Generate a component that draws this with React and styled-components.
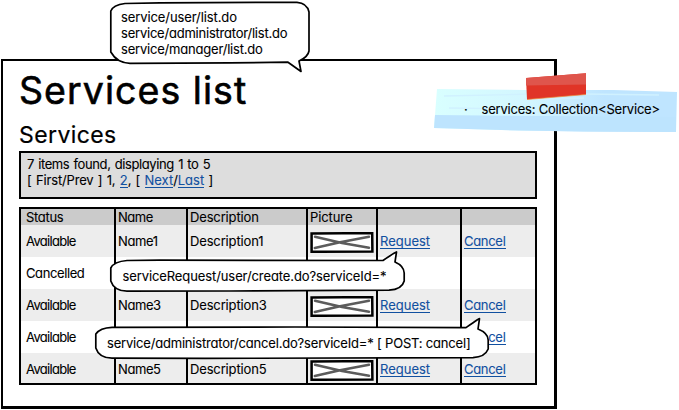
import React from "react";
import styled, { createGlobalStyle } from "styled-components";

const GlobalStyle = createGlobalStyle`
  * { box-sizing: border-box; }
  body {
    margin: 0;
    background: #fff;
    color: #000;
    font: 400 13px/16px Inter, "Liberation Sans", sans-serif;
    font-feature-settings: "cv11";
    -webkit-text-stroke: 0.1px currentColor;
    overflow: hidden;
  }
`;

const Canvas = styled.div`
  position: relative;
  width: 679px;
  height: 410px;
  padding: 59px 0 0 1px;
`;

const Window = styled.main`
  width: 556px;
  height: 350px;
  padding: 8px 17px 0 16px;
  border: solid #000;
  border-width: 2px 3px 3px 2px;
`;

const Title = styled.h1`
  margin: 0;
  font-size: 37.5px;
  font-weight: 400;
  line-height: 44px;
  letter-spacing: 1.05px;
  -webkit-text-stroke: 0.6px currentColor;
`;

const Subtitle = styled.h2`
  margin: 8px 0 0;
  font-size: 23px;
  font-weight: 400;
  line-height: 28px;
  letter-spacing: 0.4px;
  -webkit-text-stroke: 0.2px currentColor;
`;

const Pager = styled.section`
  height: 48px;
  width: 518px;
  margin-top: 2px;
  padding: 3px 6px;
  border: 2px solid #000;
  background: #ddd;
`;

const PagerLine = styled.div`
  white-space: nowrap;
  letter-spacing: ${(p) => p.$tracking || 0}px;
  word-spacing: ${(p) => p.$words || 0}px;
`;

const Link = styled.a`
  color: #1150a0;
  border-bottom: 1px solid currentColor;
  display: inline-block;
  height: 16px;
  line-height: 16px;
  letter-spacing: ${(p) => p.$tracking || 0}px;
`;

const Table = styled.section`
  width: 518px;
  height: 178px;
  margin-top: 8px;
  border: 2px solid #000;
  overflow: hidden;
`;

const Row = styled.div`
  display: grid;
  grid-template-columns: 95px 72px 120px 70px 84px 1fr;
  height: ${(p) => (p.$header ? 16 : 32)}px;
  background: ${(p) => (p.$header ? "#cbcbcb" : p.$striped ? "#ededed" : "#fff")};
`;

const Cell = styled.div`
  display: flex;
  align-items: center;
  padding-left: ${(p) => (p.$first ? 5 : 2)}px;
  border-right: ${(p) => (p.$last ? "none" : "2px solid #000")};
  letter-spacing: ${(p) => p.$tracking || 0}px;
  white-space: nowrap;
`;

const Picture = styled.svg`
  display: block;
  width: 64px;
  height: 21px;
  margin: 3px 0 0 0;
  flex: none;
`;

const Bubble = styled.div`
  position: absolute;
  left: ${(p) => p.$x}px;
  top: ${(p) => p.$y}px;
  width: ${(p) => p.$w}px;
  height: ${(p) => p.$h}px;
  padding: ${(p) => p.$pad};
`;

const BubbleShape = styled.svg`
  position: absolute;
  inset: 0;
  width: 100%;
  height: 100%;
  overflow: visible;
  fill: #fff;
  stroke: #000;
  stroke-width: 1.7;
  stroke-linejoin: round;
`;

const BubbleLine = styled.div`
  position: relative;
  white-space: nowrap;
  letter-spacing: ${(p) => p.$tracking}px;
`;

const Note = styled.aside`
  position: absolute;
  left: 434px;
  top: 73px;
  width: 245px;
  height: 60px;
`;

const NoteShape = styled.svg`
  position: absolute;
  inset: 0;
`;

const NoteText = styled.div`
  position: relative;
  display: flex;
  gap: 14px;
  padding: 28px 0 0 30px;
  letter-spacing: -0.21px;
  white-space: nowrap;
`;

const rows = [
  { status: "Available", name: "Name1", description: "Description1", active: true },
  { status: "Cancelled", name: "", description: "", active: false },
  { status: "Available", name: "Name3", description: "Description3", active: true },
  { status: "Available", name: "", description: "", cancelOnly: true },
  { status: "Available", name: "Name5", description: "Description5", active: true },
];

function PicturePlaceholder() {
  return (
    <Picture viewBox="0 0 64 21">
      <path d="M1.6 1.6 62.2 1 62.4 19.4 1.6 19.8Z" fill="#fff" stroke="#000" strokeWidth="2.5" />
      <path d="M5 4.8 32 11 59 15.8M4.8 16 30 10.2 59 4.8" fill="none" stroke="#5c5c5c" strokeWidth="2.5" strokeLinecap="round" />
    </Picture>
  );
}

export default function App() {
  return (
    <>
      <GlobalStyle />
      <Canvas>
        <Window>
          <Title>Services list</Title>
          <Subtitle>Services</Subtitle>
          <Pager>
            <PagerLine $tracking={-0.4} $words={1}>7 items found, displaying 1 to 5</PagerLine>
            <PagerLine $tracking={-0.15} $words={0.8}>
              [ First/Prev ] 1, <Link>2</Link>, [ <Link>Next</Link>/<Link>Last</Link> ]
            </PagerLine>
          </Pager>
          <Table>
            <Row $header>
              <Cell $first $tracking={-0.3}>Status</Cell>
              <Cell $tracking={-0.5}>Name</Cell>
              <Cell $tracking={-0.15}>Description</Cell>
              <Cell $tracking={-0.1}>Picture</Cell>
              <Cell />
              <Cell $last />
            </Row>
            {rows.map((row, i) => (
              <Row key={i} $striped={i % 2 === 0}>
                <Cell $first $tracking={row.active || row.cancelOnly ? -0.7 : -0.4}>{row.status}</Cell>
                <Cell $tracking={-0.4}>{row.name}</Cell>
                <Cell $tracking={-0.15}>{row.description}</Cell>
                <Cell>{row.active && <PicturePlaceholder />}</Cell>
                <Cell>{row.active && <Link>Request</Link>}</Cell>
                <Cell $last>{(row.active || row.cancelOnly) && <Link $tracking={-0.3}>Cancel</Link>}</Cell>
              </Row>
            ))}
          </Table>
        </Window>

        <Bubble $x={110} $y={2} $w={200} $h={70} $pad="7px 0 0 11px">
          <BubbleShape viewBox="0 0 200 70">
            <path d="M.8 50V9Q3 3 15 1.5L50 .8 187 .3Q197 1 199 10V49Q198 55 189 59L191 69.5 178 60.2 120 60.8 20 61.3Q7 61 .8 50Z" />
          </BubbleShape>
          <BubbleLine $tracking={-0.1}>service/user/list.do</BubbleLine>
          <BubbleLine $tracking={-0.22}>service/administrator/list.do</BubbleLine>
          <BubbleLine $tracking={-0.2}>service/manager/list.do</BubbleLine>
        </Bubble>

        <Bubble $x={110} $y={251} $w={295} $h={41} $pad="17px 0 0 12.5px">
          <BubbleShape viewBox="0 0 295 41">
            <path d="M.8 30V17Q4 10.5 17 9.5L50 9.2 273 9.5Q281 4 284 2.3L286.5 1 285 11Q294 15 294.2 22V30Q292 38.5 279 39.2L120 40 17 40.2Q4 40 .8 30Z" />
          </BubbleShape>
          <BubbleLine $tracking={-0.1}>serviceRequest/user/create.do?serviceId=*</BubbleLine>
        </Bubble>

        <Bubble $x={95} $y={318} $w={394} $h={41} $pad="17px 0 0 12px">
          <BubbleShape viewBox="0 0 394 41">
            <path d="M.8 30V16Q5 10 17 9.4L200 9 371 9.6Q379 4 382 2L384.5 .6 383 11Q393 15 393.2 22V31Q390 39 378 39.6L110 40.4 17 40.2Q4 40 .8 30Z" />
          </BubbleShape>
          <BubbleLine $tracking={-0.19}>service/administrator/cancel.do?serviceId=* [ POST: cancel]</BubbleLine>
        </Bubble>

        <Note>
          <NoteShape width="245" height="60" viewBox="0 0 245 60">
            <defs>
              <linearGradient id="paper">
                <stop offset="0" stopColor="#d9ffff" />
                <stop offset="0.4" stopColor="#d2f5ff" />
                <stop offset="0.7" stopColor="#bfe5ff" />
              </linearGradient>
            </defs>
            <path d="M3 16 90 17 180 17 243 19 242 59 150 58.5 85 57.5 0 55Z" fill="url(#paper)" />
            <path d="M1 42 110 43 242 44 242 59 150 58.5 85 57.5 0 55Z" fill="#bde4fe" />
            <path d="M10 23 100 21M90 26 150 25M15 35 80 36M95 39 165 39M150 21 225 22" stroke="#d0f1ff" strokeWidth="1.3" fill="none" />
            <path d="M92 5 152 .3 152 21.5 93 26.5Z" fill="#e03427" />
            <path d="M92 5 152 .3 152 11.5 92 12.5Z" fill="#df554c" />
            <path d="M93 26.5 152 21.5" stroke="#f08a35" strokeWidth=".7" />
          </NoteShape>
          <NoteText>
            <span>·</span>
            <span>services: Collection&lt;Service&gt;</span>
          </NoteText>
        </Note>
      </Canvas>
    </>
  );
}
